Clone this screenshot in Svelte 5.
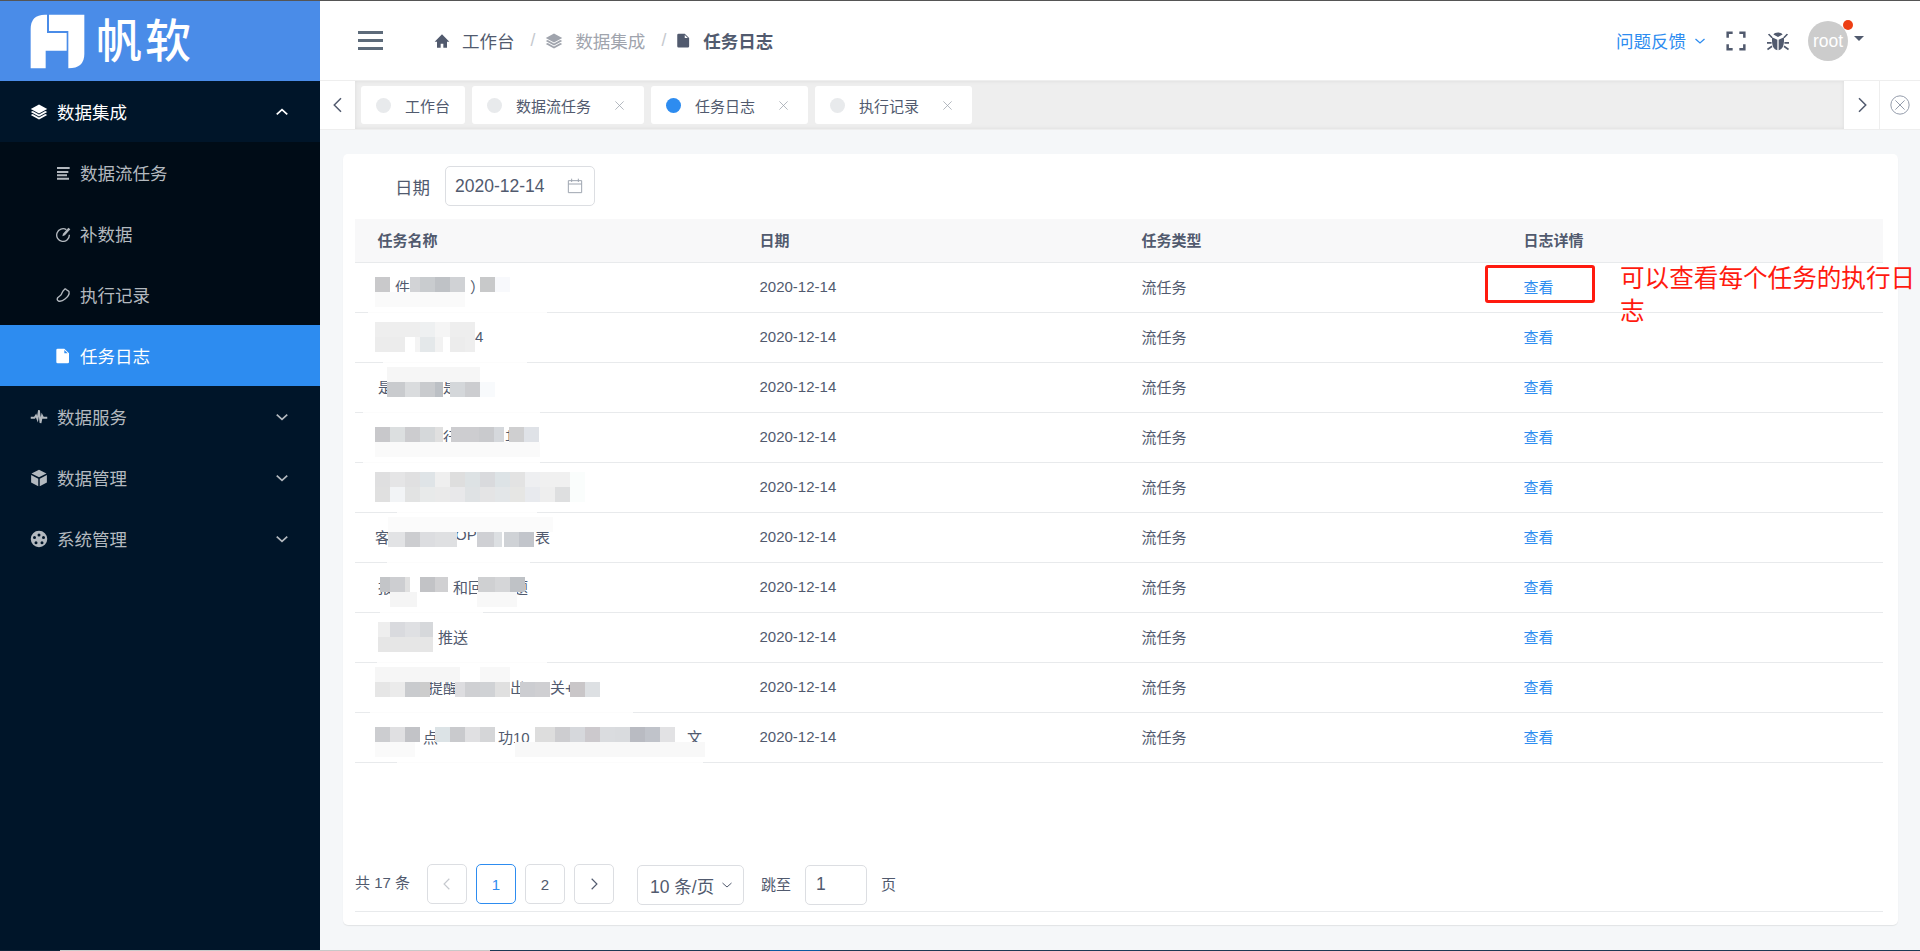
<script>
	const icons = {
		layers: { fill: 'M12 2 23 8l-11 6L1 8zM1 12l2.6-1.4L12 15.2l8.4-4.6L23 12l-11 6zM1 16l2.6-1.4L12 19.2l8.4-4.6L23 16l-11 6z' },
		lines: { fill: 'M3 3h19v3H3zM3 9h17v3H3zM3 14h15v3H3zM3 19h18v3H3z' },
		refill: {
			stroke: 'M17 5.5A9.5 9.5 0 1 0 21.5 13',
			fill: 'M20 2.5 23 5l-8 9-4 1.5 1-4z'
		},
		pepper: {
			stroke: 'M16 3c1 2 4 2 5 4 1 4-2 8-6 11-3 2.600-7 4-10 3-2-1-2-3-1-5 2-2 5-3 6-6 1-2 2-5 4-6 0-1 1-1 2-1z'
		},
		file: { fill: 'M4 1h10l7 7v13a2 2 0 0 1-2 2H4a2 2 0 0 1-2-2V3a2 2 0 0 1 2-2zM14 3v5h5z' },
		pulse: { stroke: 'M1 13h5l2-3 2 5 2-12 2 17 2-10 1.500 3H23' },
		cube: {
			fill: 'M12 1 22 6l-10 5L2 6zM1.500 8 11 13v10L1.500 18zM22.500 8v10L13 23V13z'
		},
		gear: {
			fill: 'M12 1a11 11 0 1 0 0 22 11 11 0 0 0 0-22zM12 4.500a2 2 0 1 1 0 4 2 2 0 0 1 0-4zM6 8a2 2 0 1 1 0 4 2 2 0 0 1 0-4zM18 8a2 2 0 1 1 0 4 2 2 0 0 1 0-4zM8 15a2 2 0 1 1 0 4 2 2 0 0 1 0-4zM16 15a2 2 0 1 1 0 4 2 2 0 0 1 0-4z'
		},
		home: { fill: 'M12 2 1 13h3.500v9h5.500v-6h4v6h5.500v-9H23z' },
		down: { stroke: 'M3 8l9 8 9-8' },
		up: { stroke: 'M3 16l9-8 9 8' },
		left: { stroke: 'M16 3 7 12l9 9' },
		right: { stroke: 'M8 3l9 9-9 9' },
		close: { stroke: 'M3 3l18 18M21 3 3 21' },
		calendar: { stroke: 'M2 4h20v18H2zM2 9h20M7 1v5M17 1v5' },
		expand: { stroke: 'M8 2H2v6M16 2h6v6M8 22H2v-6M16 22h6v-6' },
		bug: {
			fill: 'M7 5c1-3 9-3 10 0l-5 2.500zM5.500 8 11.300 10.500V22C7 21 5 17 5.500 8zM18.500 8 12.700 10.500V22C17 21 19 17 18.500 8zM1 5l1.500-1L6 7.500 5 9zM23 5l-1.500-1L18 7.500l1 1.500zM0 13h5v2H0zM19 13h5v2h-5zM1 22l-1-1.500L5 17l1 1.500zM23 22l1-1.500L19 17l-1 1.500z'
		},
		circleX: { stroke: 'M12 2a10 10 0 1 0 0 20 10 10 0 0 0 0-20zM7 7l10 10M17 7 7 17' }
	};

	const subItems = [
		{ label: '数据流任务', icon: 'lines' },
		{ label: '补数据', icon: 'refill' },
		{ label: '执行记录', icon: 'pepper' },
		{ label: '任务日志', icon: 'file', active: true }
	];
	const groups = [
		{ label: '数据服务', icon: 'pulse' },
		{ label: '数据管理', icon: 'cube' },
		{ label: '系统管理', icon: 'gear' }
	];
	const tabs = [
		{ label: '工作台', fixed: true },
		{ label: '数据流任务' },
		{ label: '任务日志', active: true },
		{ label: '执行记录' }
	];

	// blurred task names: visible leftovers as [width, text], mosaic strips as [width, colour],
	// wipe is the part of the row line the brush painted over, [left, width]
	const rows = [
		{
			y: 14,
			wipe: [13, 179],
			text: [[20, ''], [75, '件'], [20, '）']],
			a: [[15, 'c9c9cb'], [20, ''], [10, 'd2d3d6'], [15, 'c9cccf'], [15, 'bfc2c6'], [15, 'd0d2d5'], [15, ''], [15, 'c8c9ca'], [15, 'f8f9fc']],
			b: [[90, 'fafafa']]
		},
		{
			y: 9,
			wipe: [28, 144],
			text: [[30, 'e'], [70, ''], [20, '4']],
			a: [[45, 'eeeeee'], [15, 'eef0f1'], [15, 'f5f5f5'], [25, 'eeeeee']],
			b: [[30, 'ececec'], [10, ''], [5, 'f4f4f4'], [15, 'e4e8ea'], [8, 'f2f2f2'], [7, ''], [15, 'ececec'], [10, 'eeeeee']]
		},
		{
			y: 4,
			wipe: [8, 177],
			text: [[3, ''], [65, '是'], [20, '是']],
			a: [[12, ''], [93, 'f6f6f6']],
			b: [[12, ''], [18, 'c9cbce'], [15, 'dadcde'], [15, 'c9cbce'], [8, 'bcc0c5'], [7, ''], [15, 'd4d7da'], [15, 'cccdd0'], [15, 'f8fafc']]
		},
		{
			y: 14,
			wipe: [8, 177],
			text: [[68, ''], [62, '行'], [20, '其']],
			a: [[15, 'c8c8cb'], [15, 'dcdfe0'], [15, 'cccccf'], [15, 'd5d8da'], [8, 'e0e0e0'], [8, ''], [28, 'cdcdd0'], [15, 'c9cacd'], [10, 'd5d8dc'], [5, ''], [15, 'cfcfd0'], [15, 'dfe2e7']],
			b: [[165, 'fafafa']]
		},
		{
			y: 9,
			wipe: [42, 140],
			text: [],
			a: [[15, 'dfdfe0'], [15, 'e5e5e6'], [15, 'e0e0e1'], [15, 'dfe4e7'], [15, 'efefef'], [15, 'dedede'], [15, 'dde2e4'], [15, 'd9dadd'], [15, 'dde3e6'], [15, 'e3e3e3'], [15, 'eeeff1'], [30, 'f0f0f0'], [15, 'fafdfc']],
			b: [[15, 'e0e0e0'], [15, 'f2f4f6'], [15, 'e2e3e3'], [15, 'e8eaea'], [15, 'eaeaea'], [15, 'e8e8ea'], [15, 'dfe2e4'], [15, 'e4e4e5'], [15, 'e3e6e8'], [15, 'e6e6e4'], [15, 'e8eaee'], [15, 'eeeeee'], [15, 'dedfe0'], [15, 'fafdfc']]
		},
		{
			y: 4,
			wipe: [32, 143],
			text: [[3, '客'], [77, ''], [80, 'OP'], [20, '表']],
			a: [[13, ''], [165, 'fbfbfb']],
			b: [[13, ''], [17, 'e2e3e5'], [15, 'cccdd0'], [15, 'dcdde0'], [22, 'dfe0e2'], [20, ''], [17, 'cfd0d4'], [8, 'dcdfe2'], [2, ''], [15, 'cfd2d6'], [15, 'c2c5cb']]
		},
		{
			y: 14,
			wipe: [25, 103],
			text: [[3, ''], [75, '报'], [60, '和回'], [20, '题']],
			a: [[5, ''], [10, 'c3c5c8'], [15, 'cdced1'], [5, 'e0e0e0'], [10, ''], [15, 'c2c3c6'], [13, 'd0d0d2'], [30, ''], [17, 'cfd0d2'], [15, 'd5d6d8'], [15, 'bfc2c6']],
			b: [[15, ''], [27, 'f5f5f5'], [60, ''], [40, 'f8f8f8']]
		},
		{
			y: 9,
			wipe: [22, 170],
			text: [[63, ''], [40, '推送']],
			a: [[3, ''], [12, 'eeeeee'], [15, 'd9dade'], [15, 'dfe0e3'], [13, 'd6d8db']],
			b: [[3, ''], [55, 'e6e6e6']]
		},
		{
			y: 4,
			wipe: [15, 263],
			text: [[53, ''], [82, '提醒-'], [40, '出'], [20, '关+']],
			a: [[85, 'f6f6f6'], [20, ''], [30, 'f8f8f8']],
			b: [[15, 'e6e6e6'], [15, 'ebebeb'], [15, 'c9cbce'], [10, 'cccccc'], [25, ''], [10, 'dddde0'], [15, 'cfd0d3'], [15, 'd0d2d5'], [15, 'e0e0e0'], [10, ''], [15, 'cccdd1'], [15, 'cfcfd2'], [20, ''], [15, 'c9c6c8'], [15, 'dde0e3']]
		},
		{
			y: 14,
			wipe: [42, 306],
			text: [[48, ''], [75, '点'], [124, '功10'], [65, '交'], [20, '文']],
			a: [[15, 'cccdd0'], [15, 'e0e0e2'], [15, 'c2c3c7'], [15, ''], [15, 'dce3e6'], [15, 'c9cacd'], [15, 'e0e0e2'], [15, 'd5d6d8'], [40, ''], [20, 'dddddd'], [15, 'cdcdd0'], [15, 'd6d8dc'], [15, 'ccc9cd'], [15, 'dadcdf'], [15, 'd9dbde'], [15, 'b9bbc2'], [15, 'c0c3ca'], [15, 'e2e2e4']],
			b: [[40, 'fafafa'], [100, ''], [190, 'f8f8f8']]
		}
	];
</script>

{#snippet icon(name, size, cls = '')}
	<svg class="icon {cls}" width={size} height={size} viewBox="0 0 24 24" aria-hidden="true">
		{#if icons[name].fill}<path d={icons[name].fill} fill="currentColor" fill-rule="evenodd" />{/if}
		{#if icons[name].stroke}<path d={icons[name].stroke} fill="none" stroke="currentColor" />{/if}
	</svg>
{/snippet}

{#snippet strip(segs)}
	<div class="strip">
		{#each segs as [w, c]}
			<i style:width="{w}px" style:background={c ? '#' + c : 'transparent'}></i>
		{/each}
	</div>
{/snippet}

<div class="page">
	<div class="main">
		<aside class="sider">
			<div class="logo">
				<svg width="70" height="66" viewBox="0 0 210 198" aria-hidden="true">
					<path fill="#fff" d="M17 178V60Q17 17 60 17h6v55h59v53H62v53z" />
					<path fill="#fff" d="M72 17h106v118q0 43-48 43V66H72z" />
				</svg>
				<span class="brand">帆软</span>
			</div>

			<div class="group open">
				{@render icon('layers', 18)}
				<span>数据集成</span>
				{@render icon('up', 14, 'arrow')}
			</div>
			<div class="submenu">
				{#each subItems as item}
					<div class="subitem" class:active={item.active}>
						{@render icon(item.icon, 16)}
						<span>{item.label}</span>
					</div>
				{/each}
			</div>
			{#each groups as g}
				<div class="group">
					{@render icon(g.icon, 18)}
					<span>{g.label}</span>
					{@render icon('down', 14, 'arrow')}
				</div>
			{/each}
		</aside>

		<div class="right">
			<header class="header">
				<div class="burger"><b></b><b></b><b></b></div>
				<nav class="crumbs">
					{@render icon('home', 16)}
					<span class="crumb">工作台</span>
					<em>/</em>
					<span class="faded">{@render icon('layers', 18)}</span>
					<span class="crumb faded">数据集成</span>
					<em>/</em>
					{@render icon('file', 15)}
					<strong class="crumb">任务日志</strong>
				</nav>
				<div class="tools">
					<span class="feedback">问题反馈 {@render icon('down', 12)}</span>
					<span class="expand">{@render icon('expand', 20)}</span>
					<span class="bug">{@render icon('bug', 22)}</span>
					<div class="avatar">root<i></i></div>
					<span class="caret"></span>
				</div>
			</header>

			<div class="tagbar">
				<button class="nav">{@render icon('left', 18)}</button>
				<div class="tags">
					{#each tabs as t}
						<div class="tag" class:fixed={t.fixed}>
							<i class="dot" class:on={t.active}></i>
							<span>{t.label}</span>
							{#if !t.fixed}<span class="x">{@render icon('close', 11)}</span>{/if}
						</div>
					{/each}
				</div>
				<button class="nav">{@render icon('right', 18)}</button>
				<button class="nav closeall">{@render icon('circleX', 22)}</button>
			</div>

			<main class="content">
				<section class="card">
					<div class="filter">
						<label for="day">日期</label>
						<div class="date" id="day">
							<span>2020-12-14</span>
							{@render icon('calendar', 16)}
						</div>
					</div>

					<div class="table">
						<div class="row head">
							<div>任务名称</div>
							<div>日期</div>
							<div>任务类型</div>
							<div>日志详情</div>
						</div>
						{#each rows as r, i}
							<div class="row">
								<div class="name">
									<div class="frags">
										{#each r.text as [w, t]}
											<span style:width="{w}px">{t}</span>
										{/each}
									</div>
									<div class="mosaic" style:top="{r.y}px">
										{@render strip(r.a)}
										{@render strip(r.b)}
									</div>
									<i class="wipe" style:left="{r.wipe[0]}px" style:width="{r.wipe[1]}px"></i>
								</div>
								<div>2020-12-14</div>
								<div>流任务</div>
								<div class="detail">
									<a href="#view">查看</a>
									{#if i === 0}
										<div class="mark"></div>
										<div class="note">可以查看每个任务的执行日志</div>
									{/if}
								</div>
							</div>
						{/each}
					</div>

					<div class="pager">
						<span class="total">共 17 条</span>
						<div class="pages">
							<span class="pg off">{@render icon('left', 14)}</span>
							<span class="pg cur">1</span>
							<span class="pg">2</span>
							<span class="pg">{@render icon('right', 14)}</span>
						</div>
						<div class="size">10 条/页 {@render icon('down', 12)}</div>
						<span class="small">跳至</span>
						<div class="jump">1</div>
						<span class="small">页</span>
					</div>
				</section>
			</main>
		</div>
	</div>
	<div class="taskbar"></div>
</div>

<style>
	:global(body) {
		margin: 0;
		background: #f5f7f9;
	}

	.page {
		height: 951px;
		display: flex;
		flex-direction: column;
		overflow: hidden;
		border-top: 1px solid #555;
		box-sizing: border-box;
		font-family: 'Liberation Sans', 'Noto Sans CJK SC', sans-serif;
		font-size: 15px;
		color: #515a6e;
	}

	.main {
		flex: 1;
		display: flex;
		min-height: 0;
	}

	.taskbar {
		height: 1px;
		background: linear-gradient(to right, #0d2237 60px, #c8c8c8 60px, #c8c8c8 490px, #1d3a55 490px, #1d3a55 770px, #0a5aa0 770px, #0a5aa0 820px, #1d3a55 820px);
	}

	.icon {
		display: block;
		flex: none;
		stroke-width: 2;
	}

	.sider {
		width: 320px;
		flex: none;
		background: #001529;
		color: #b3b9bf;
		font-size: 17.5px;
	}

	.logo {
		height: 80px;
		background: #4a8ce8;
		display: flex;
		align-items: center;
		padding-left: 25px;
	}

	.logo svg {
		margin-top: 2px;
	}

	.brand {
		margin-left: 1px;
		font-size: 46px;
		font-weight: 500;
		letter-spacing: 3px;
		color: #fff;
		line-height: 1;
	}

	.group {
		height: 61px;
		display: flex;
		align-items: center;
		gap: 9px;
		padding-left: 30px;
		padding-right: 31px;
	}

	.group span {
		flex: 1;
	}

	.group.open {
		color: #fff;
	}

	.group :global(.icon) {
		stroke-width: 2.4;
	}

	.group :global(.arrow) {
		stroke-width: 3;
	}

	.submenu {
		background: #000c17;
	}

	.subitem {
		height: 61px;
		display: flex;
		align-items: center;
		gap: 9px;
		padding-left: 55px;
		box-sizing: border-box;
	}

	.subitem.active {
		background: #2d8cf0;
		color: #fff;
	}

	.right {
		flex: 1;
		min-width: 0;
		display: flex;
		flex-direction: column;
	}

	.header {
		height: 80px;
		flex: none;
		box-sizing: border-box;
		background: #fff;
		border-bottom: 1px solid #eee;
		display: flex;
		align-items: center;
		padding-left: 38px;
	}

	.burger {
		width: 25px;
		display: flex;
		flex-direction: column;
		gap: 5px;
	}

	.burger b {
		height: 3px;
		background: #5d6b7a;
	}

	.crumbs {
		margin-left: 51px;
		display: flex;
		align-items: center;
		gap: 12px;
		font-size: 17.5px;
	}

	.crumbs em {
		font-style: normal;
		color: #c5c8ce;
		margin: 0 -2px 0 4px;
	}

	.crumbs strong {
		font-weight: 700;
	}

	.faded {
		color: #a0a4ad;
	}

	.tools {
		margin-left: auto;
		display: flex;
		align-items: center;
		padding-right: 56px;
	}

	.feedback {
		color: #2d8cf0;
		font-size: 17.5px;
		display: flex;
		align-items: center;
		gap: 8px;
	}

	.feedback :global(.icon) {
		stroke-width: 2.6;
	}

	.expand {
		margin-left: 20px;
	}

	.expand :global(.icon) {
		stroke-width: 3;
	}

	.bug {
		margin-left: 21px;
	}

	.avatar {
		position: relative;
		margin-left: 19px;
		width: 40px;
		height: 40px;
		border-radius: 50%;
		background: #ccc;
		color: #fff;
		font-size: 17.5px;
		line-height: 40px;
		text-align: center;
	}

	.avatar i {
		position: absolute;
		top: -1px;
		right: -5px;
		width: 10px;
		height: 10px;
		border-radius: 50%;
		background: #ed3f14;
	}

	.caret {
		margin: -4px 0 0 6px;
		border: 5.5px solid transparent;
		border-top: 5.5px solid #515a6e;
		border-bottom: 0;
	}

	.tagbar {
		height: 49px;
		flex: none;
		display: flex;
		background: #fff;
		border-bottom: 1px solid #eee;
		box-sizing: border-box;
	}

	.nav {
		width: 35px;
		padding: 0;
		border: 0;
		background: #fff;
		color: #515a6e;
		display: flex;
		align-items: center;
		justify-content: center;
	}

	.closeall {
		width: 41px;
		border-left: 1px solid #eee;
		color: #8a93a3;
	}

	.closeall :global(.icon) {
		stroke-width: 1;
	}

	.tags {
		flex: 1;
		display: flex;
		align-items: center;
		gap: 7px;
		padding-left: 6px;
		background: #eee;
		box-shadow: inset 0 0 4px rgba(0, 0, 0, 0.08);
	}

	.tag {
		height: 38px;
		display: flex;
		align-items: center;
		padding: 0 19px 0 15px;
		gap: 14px;
		background: #fff;
		border-radius: 3px;
	}

	.tag.fixed {
		padding-right: 15px;
	}

	.dot {
		width: 15px;
		height: 15px;
		border-radius: 50%;
		background: #e8eaec;
	}

	.dot.on {
		background: #2d8cf0;
	}

	.x {
		margin-left: 9px;
		color: #9aa0aa;
	}

	.x :global(.icon) {
		stroke-width: 1.6;
	}

	.content {
		flex: 1;
		min-height: 0;
		padding: 24px 22px 25px 23px;
		display: flex;
		flex-direction: column;
	}

	.card {
		flex: 1;
		background: #fff;
		border-radius: 5px;
		box-shadow: 0 1px 1px rgba(0, 0, 0, 0.08);
		padding: 0 15px 13px 12px;
		display: flex;
		flex-direction: column;
	}

	.filter {
		height: 65px;
		box-sizing: border-box;
		display: flex;
		align-items: center;
		padding: 0 0 1px 40px;
		font-size: 17.5px;
	}

	.date {
		width: 150px;
		height: 40px;
		margin-left: 15px;
		box-sizing: border-box;
		border: 1px solid #dcdee2;
		border-radius: 5px;
		padding: 0 11px 0 9px;
		display: flex;
		align-items: center;
		justify-content: space-between;
	}

	.date :global(.icon) {
		color: #9ea5b0;
		stroke-width: 1.5;
	}

	.row {
		height: 50px;
		box-sizing: border-box;
		border-bottom: 1px solid #e8eaec;
		display: grid;
		grid-template-columns: repeat(4, 382px);
		align-items: center;
	}

	.row > div {
		padding: 0 0 2px 22.5px;
		height: 100%;
		display: flex;
		align-items: center;
		box-sizing: border-box;
	}

	.row.head {
		height: 44px;
		background: #f8f8f9;
		font-weight: 700;
	}

	.row > .name {
		position: relative;
		padding-left: 20px;
	}

	.frags {
		display: flex;
		white-space: nowrap;
	}

	.frags span {
		flex: none;
	}

	.mosaic {
		position: absolute;
		left: 20px;
	}

	.strip {
		display: flex;
		height: 15px;
	}

	.strip i {
		flex: none;
		height: 15px;
	}

	.wipe {
		position: absolute;
		bottom: -1px;
		height: 1px;
		background: #fcfcfc;
	}

	.detail {
		position: relative;
	}

	.detail a {
		color: #2d8cf0;
		text-decoration: none;
	}

	.mark {
		position: absolute;
		left: -16px;
		top: 2px;
		width: 110px;
		height: 38px;
		box-sizing: border-box;
		border: 3px solid #ff1a0f;
		border-radius: 3px;
	}

	.note {
		position: absolute;
		left: 119px;
		top: -1px;
		width: 300px;
		font-size: 24.6px;
		line-height: 33px;
		color: #ff1a0f;
	}

	.pager {
		margin-top: auto;
		height: 41px;
		padding-bottom: 6px;
		border-bottom: 1px solid #e8eaec;
		display: flex;
		align-items: flex-start;
		width: 1528px;
	}

	.total {
		line-height: 38px;
		width: 72px;
	}

	.pages {
		display: flex;
		gap: 9px;
	}

	.pg {
		width: 40px;
		height: 40px;
		box-sizing: border-box;
		border: 1px solid #dcdee2;
		border-radius: 5px;
		display: flex;
		align-items: center;
		justify-content: center;
		font-size: 15px;
	}

	.pg.off {
		color: #c5c8ce;
	}

	.pg.cur {
		border-color: #2d8cf0;
		color: #2d8cf0;
	}

	.size {
		margin: 1px 0 0 23px;
		width: 107px;
		height: 40px;
		box-sizing: border-box;
		border: 1px solid #dcdee2;
		border-radius: 5px;
		padding-left: 12px;
		display: flex;
		align-items: center;
		gap: 7px;
		font-size: 17.5px;
		white-space: nowrap;
	}

	.small {
		line-height: 42px;
		margin-left: 17px;
	}

	.jump {
		margin: 1px 14px 0 14px;
		width: 62px;
		height: 40px;
		box-sizing: border-box;
		border: 1px solid #dcdee2;
		border-radius: 5px;
		padding-left: 10px;
		font-size: 17.5px;
		line-height: 36px;
	}

	.jump + .small {
		margin-left: 0;
	}
</style>
